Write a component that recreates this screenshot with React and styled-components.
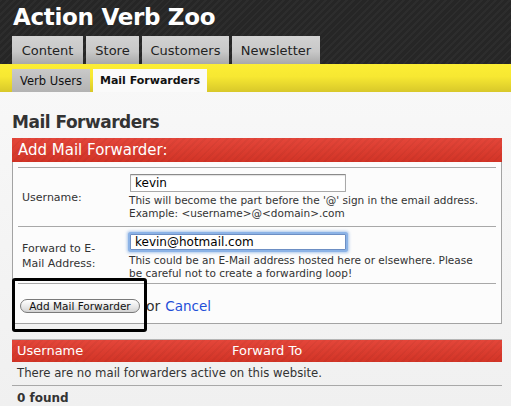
import React from "react";
import styled, { createGlobalStyle } from "styled-components";

const Global = createGlobalStyle`
  html, body { margin: 0; padding: 0; background: #f8f8f8; }
  body { font-family: "DejaVu Sans", "Lucida Grande", sans-serif; color: #333; }
  * { box-sizing: border-box; }
`;

const Page = styled.div`
  width: 511px;
  height: 406px;
  overflow: hidden;
  background: linear-gradient(#fafafa, #f0f0f0);
`;

const Header = styled.div`
  height: 64px;
  background-color: #262626;
  background-image: repeating-linear-gradient(-45deg, rgba(255,255,255,0.03) 0 2px, transparent 2px 5px);
  padding: 0 0 0 12px;
  display: flex;
  flex-direction: column;
  justify-content: space-between;
`;

const Title = styled.h1`
  margin: 0;
  padding: 2px 0 0 1px;
  font-size: 23px;
  line-height: 30px;
  font-weight: bold;
  color: #fff;
  letter-spacing: -0.3px;
`;

const TabRow = styled.div`
  display: flex;
  gap: 3px;
  align-items: flex-end;
`;

const Tab = styled.div`
  height: 28px;
  width: ${p => p.$w}px;
  background: linear-gradient(#d2d2d2 0%, #c8c8c8 55%, #a9a9a9 100%);
  color: #222;
  font-size: 13px;
  display: flex;
  align-items: center;
  justify-content: center;
  padding-top: 1px;
`;

const SubBar = styled.div`
  height: 28px;
  background: linear-gradient(#fcee34 0%, #f7e832 45%, #d8c82a 100%);
  padding: 5px 0 0 12px;
  display: flex;
  gap: 3px;
  align-items: stretch;
`;

const SubTab = styled.div`
  width: ${p => p.$w}px;
  background: ${p => (p.$active ? "#fafafa" : "linear-gradient(#c9c9c9, #b3b3b3)")};
  color: #111;
  font-size: ${p => (p.$active ? "11px" : "11.5px")};
  font-weight: ${p => (p.$active ? "bold" : "normal")};
  display: flex;
  align-items: center;
  justify-content: center;
`;

const Main = styled.div`
  padding: 0 9px 0 12px;
`;

const Heading = styled.h2`
  margin: 0;
  padding: 19px 0 0 0;
  height: 46px;
  font-size: 17px;
  line-height: 22px;
  font-weight: bold;
  letter-spacing: -0.5px;
  color: #333;
`;

const stripes = `
  background-color: #de3e30;
  background-image:
    repeating-linear-gradient(-45deg, rgba(0,0,0,0.035) 0 2px, transparent 2px 5px),
    linear-gradient(#e4463a, #d23426);
`;

const Box = styled.div`
  border: 1px solid #a3a3a3;
  background: #fcfcfc;
`;

const BoxHeader = styled.div`
  ${stripes}
  height: 24px;
  margin: -1px -1px 0 -1px;
  padding: 0 0 0 6px;
  color: #fff;
  font-size: 15px;
  line-height: 24px;
`;

const FormTable = styled.div`
  margin: 5px 5px 0 5px;
  border-top: 1px solid #a8a8a8;
`;

const FormRow = styled.div`
  display: grid;
  grid-template-columns: 110px 1fr;
  align-items: center;
  border-bottom: 1px solid #a8a8a8;
  padding: ${p => p.$pad};
`;

const Label = styled.div`
  padding-left: 4px;
  font-size: 11px;
  line-height: 15px;
  color: #333;
`;

const Field = styled.div`
  display: flex;
  flex-direction: column;
  align-items: flex-start;
`;

const Input = styled.input`
  width: 216px;
  height: ${p => (p.$focus ? 16 : 18)}px;
  margin: ${p => (p.$focus ? "2px 0 2px 2px" : "0 0 0 2px")};
  border: 1px solid ${p => (p.$focus ? "#6d8fc4" : "#a9a9a9")};
  border-top-color: ${p => (p.$focus ? "#6d8fc4" : "#8a8a8a")};
  box-shadow: ${p => (p.$focus ? "0 0 0 2px #8cb3e6, 0 0 3px 3px rgba(120,165,225,0.6)" : "inset 0 1px 1px rgba(0,0,0,0.12)")};
  border-radius: 1px;
  background: #fff;
  padding: 0 0 0 4px;
  font-family: inherit;
  font-size: 12px;
  color: #000;
  outline: none;
`;

const Help = styled.div`
  margin: 2px 0 0 1px;
  font-size: 10.5px;
  line-height: 13px;
  color: #333;
`;

const ActionCell = styled.div`
  position: relative;
  display: flex;
  align-items: center;
  gap: 6px;
  padding: 14px 0 9px 2px;
  grid-column: 1 / 3;
`;

const Button = styled.button`
  height: 14px;
  padding: 0 6px;
  width: 120px;
  border: 1px solid #7a7a7a;
  border-radius: 8px;
  background: linear-gradient(#ffffff, #e6e6e6 60%, #d2d2d2);
  font-family: inherit;
  font-size: 10.5px;
  line-height: 12px;
  color: #111;
`;

const Or = styled.span`
  font-size: 14px;
  color: #333;
`;

const CancelLink = styled.a`
  font-size: 13.5px;
  color: #1f4fd8;
  text-decoration: none;
  margin-left: -1px;
`;

const Highlight = styled.div`
  position: absolute;
  left: -6px;
  top: -6px;
  width: 135px;
  height: 54px;
  border: 3px solid #000;
  border-radius: 3px;
  pointer-events: none;
`;

const Results = styled.div`
  margin-top: 15px;
  border-top: 1px solid #b5b5b5;
`;

const ResultHead = styled.div`
  ${stripes}
  height: 22px;
  display: grid;
  grid-template-columns: 215px 1fr;
  color: #fff;
  font-size: 13px;
  line-height: 22px;
  padding-left: 5px;
`;

const ResultRow = styled.div`
  height: 24px;
  border-bottom: 1px solid #a8a8a8;
  padding-left: 5px;
  font-size: 11.7px;
  line-height: 23px;
  color: #333;
`;

const Found = styled.div`
  padding: 5px 0 0 5px;
  font-size: 12px;
  font-weight: bold;
  color: #333;
`;

export default function App() {
  return (
    <Page>
      <Global />
      <Header>
        <Title>Action Verb Zoo</Title>
        <TabRow>
          <Tab $w={71}>Content</Tab>
          <Tab $w={53}>Store</Tab>
          <Tab $w={87}>Customers</Tab>
          <Tab $w={88}>Newsletter</Tab>
        </TabRow>
      </Header>
      <SubBar>
        <SubTab $w={78}>Verb Users</SubTab>
        <SubTab $w={114} $active>Mail Forwarders</SubTab>
      </SubBar>
      <Main>
        <Heading>Mail Forwarders</Heading>
        <Box>
          <BoxHeader>Add Mail Forwarder:</BoxHeader>
          <FormTable>
            <FormRow $pad="6px 0 6px 0">
              <Label>Username:</Label>
              <Field>
                <Input defaultValue="kevin" />
                <Help>
                  This will become the part before the '@' sign in the email address.
                  <br />
                  Example: &lt;username&gt;@&lt;domain&gt;.com
                </Help>
              </Field>
            </FormRow>
            <FormRow $pad="5px 0 3px 0">
              <Label>
                Forward to E-
                <br />
                Mail Address:
              </Label>
              <Field>
                <Input $focus defaultValue="kevin@hotmail.com" />
                <Help>
                  This could be an E-Mail address hosted here or elsewhere. Please
                  <br />
                  be careful not to create a forwarding loop!
                </Help>
              </Field>
            </FormRow>
            <ActionCell>
              <Button>Add Mail Forwarder</Button>
              <Or>or</Or>
              <CancelLink href="#">Cancel</CancelLink>
              <Highlight />
            </ActionCell>
          </FormTable>
        </Box>
        <Results>
          <ResultHead>
            <span>Username</span>
            <span>Forward To</span>
          </ResultHead>
          <ResultRow>There are no mail forwarders active on this website.</ResultRow>
          <Found>0 found</Found>
        </Results>
      </Main>
    </Page>
  );
}
